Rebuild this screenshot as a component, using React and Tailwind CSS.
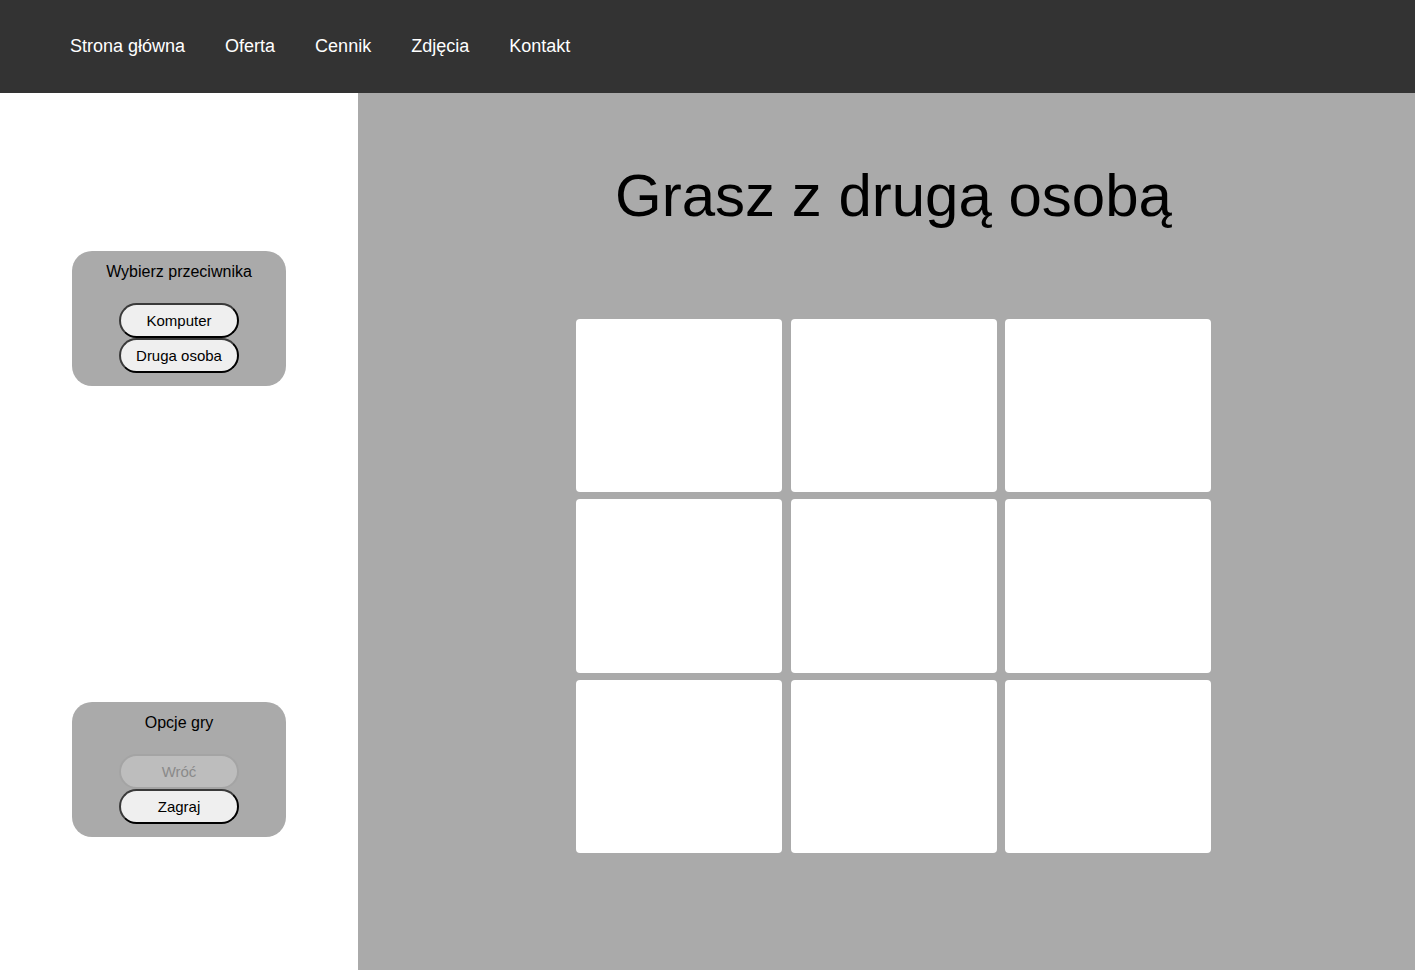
import React from 'react';

const navItems = ['Strona główna', 'Oferta', 'Cennik', 'Zdjęcia', 'Kontakt'];

function Panel({ title, children }) {
  return (
    <div className="w-[214px] h-[135px] rounded-[20px] bg-[#aaaaaa] flex flex-col items-center pt-[11px]">
      <p className="text-[16px] leading-[20px] text-black">{title}</p>
      <div className="mt-[21px] flex flex-col gap-0">{children}</div>
    </div>
  );
}

function Btn({ children, disabled }) {
  return disabled ? (
    <button
      disabled
      className="w-[120px] h-[35px] pt-[1px] rounded-full border-2 border-[#a4a4a4] bg-[#bdbdbd] text-[15px] text-[#8a8a8a]"
    >
      {children}
    </button>
  ) : (
    <button className="w-[120px] h-[35px] pt-[1px] rounded-full border-2 border-[#3a3a3a] border-b-black border-r-black bg-[#efefef] text-[15px] text-black">
      {children}
    </button>
  );
}

export default function App() {
  return (
    <div className="w-[1415px] h-[970px] flex flex-col font-['Liberation_Sans',Arial,sans-serif] overflow-hidden">
      <header className="h-[93px] shrink-0 bg-[#333333] flex items-center pl-[70px] gap-[40px]">
        {navItems.map(n => (
          <a key={n} className="text-white text-[18px] leading-none pb-[1px]">{n}</a>
        ))}
      </header>

      <div className="flex flex-1 min-h-0">
        <aside className="w-[358px] shrink-0 bg-white flex flex-col items-center pt-[158px] gap-[316px]">
          <Panel title="Wybierz przeciwnika">
            <Btn>Komputer</Btn>
            <Btn>Druga osoba</Btn>
          </Panel>
          <Panel title="Opcje gry">
            <Btn disabled>Wróć</Btn>
            <Btn>Zagraj</Btn>
          </Panel>
        </aside>

        <main className="flex-1 bg-[#aaaaaa] flex flex-col items-center pl-[14px] pt-[63px]">
          <h1 className="text-[60px] leading-[80px] text-black">Grasz z drugą osobą</h1>
          <div className="mt-[83px] grid grid-cols-[206px_206px_206px] gap-x-[8.5px] gap-y-[7px]">
            {Array.from({ length: 9 }).map((_, i) => (
              <div key={i} className="h-[173.4px] bg-white rounded-[4px]" />
            ))}
          </div>
        </main>
      </div>
    </div>
  );
}
